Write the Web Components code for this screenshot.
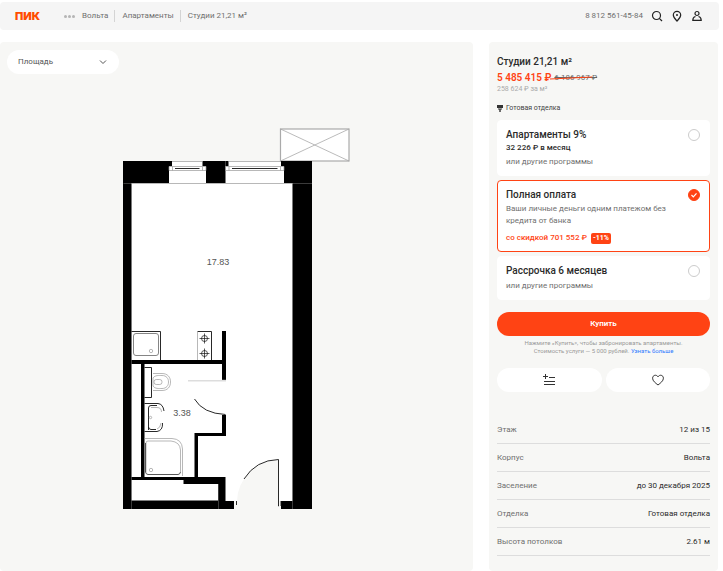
<!DOCTYPE html>
<html lang="ru">
<head>
<meta charset="utf-8">
<meta name="viewport" content="width=device-width, initial-scale=1">
<title>Студии 21,21 м² — ПИК</title>
<style>
body { margin: 0; background: #fff; color: #2b2b2b; font: 8px/12px Roboto, "Liberation Sans", sans-serif; --accent: #ff4314; --panel: #f7f7f5; --muted: #6f6f6f; }
</style>
</head>
<body>
<listing-page>
  <site-header slot="header"></site-header>
  <plan-viewer slot="plan"><floor-plan></floor-plan></plan-viewer>
  <offer-panel slot="offer">
    <price-summary></price-summary>
    <payment-options></payment-options>
    <purchase-actions></purchase-actions>
    <flat-details></flat-details>
  </offer-panel>
</listing-page>

<template id="listing-page">
  <style>
    :host { display: flex; flex-direction: column; gap: 12px; min-height: 100vh; box-sizing: border-box; padding-top: 2px; }
    main { flex: 1; display: grid; grid-template-columns: minmax(0, 1fr) 229px; gap: 16px; padding-right: 5px; }
  </style>
  <slot name="header"></slot>
  <main><slot name="plan"></slot><slot name="offer"></slot></main>
</template>

<template id="site-header">
  <style>
    :host { display: block; margin-right: 4px; background: #f5f5f5; border-radius: 4px; }
    header { display: flex; align-items: center; height: 28px; padding: 0 16px 0 15px; color: var(--muted); }
    a { color: inherit; text-decoration: none; }
    .logo { color: #ff4d00; font: 900 11px/12px Inter, sans-serif; margin-right: 24px; }
    nav { display: flex; align-items: center; }
    nav a { padding: 0 6px 0 7px; }
    nav a + a { border-left: 1px solid #d4d4d4; }
    .dots { display: flex; gap: 1px; padding: 0; border: 0; background: none; }
    .dots i { width: 3px; height: 3px; border-radius: 50%; background: #b5b5b5; }
    .tools { margin-left: auto; display: flex; align-items: center; gap: 8px; }
    .tools button { display: block; border: 0; padding: 0; background: none; width: 12px; height: 12px; }
    svg { display: block; fill: none; stroke: #222; stroke-width: 1.2; }
  </style>
  <header>
    <a class="logo" href="#">ПИК</a>
    <nav aria-label="Навигация">
      <button class="dots" aria-label="Ещё"><i></i><i></i><i></i></button>
      <a href="#">Вольта</a><a href="#">Апартаменты</a><a href="#">Студии 21,21 м²</a>
    </nav>
    <div class="tools">
      <a href="tel:+78125614584">8 812 561-45-84</a>
      <button aria-label="Поиск"><svg width="12" height="12" viewBox="0 0 12 12"><circle cx="5.5" cy="5.5" r="4"/><path d="M8.3 8.3 11 11"/></svg></button>
      <button aria-label="Карта"><svg width="12" height="12" viewBox="0 0 12 12"><path d="M6 11C4.500 9.400 2.300 7.400 2.300 5a3.700 3.700 0 0 1 7.400 0C9.700 7.400 7.500 9.400 6 11Z"/><circle cx="6" cy="4.900" r=".4"/></svg></button>
      <button aria-label="Профиль"><svg width="12" height="12" viewBox="0 0 12 12"><circle cx="6" cy="3.500" r="2"/><path d="M4.500 6.500C2.700 7 1.800 8.400 1.800 10.300h8.400C10.200 8.400 9.300 7 7.500 6.500"/></svg></button>
    </div>
  </header>
</template>

<template id="plan-viewer">
  <style>
    :host { display: block; background: var(--panel); border-radius: 4px; padding: 8px 7px; }
    .filter { position: relative; display: block; width: 112px; }
    select { appearance: none; display: block; width: 100%; height: 24px; border: 0; border-radius: 12px; padding: 0 24px 0 11px; background: #fff; color: #555; font: inherit; }
    svg { position: absolute; right: 12px; top: 8px; fill: none; stroke: #555; }
    .plan { display: flex; justify-content: center; padding-top: 54px; }
  </style>
  <div class="filter">
    <select aria-label="Площадь"><option>Площадь</option></select>
    <svg width="8" height="8" viewBox="0 0 8 8"><path d="M1 2.500 4 5.500 7 2.500"/></svg>
  </div>
  <div class="plan"><slot></slot></div>
</template>

<template id="floor-plan">
  <style>
    :host { display: block; }
    svg { display: block; max-width: 100%; }
    text { font: 9px "Liberation Sans", sans-serif; fill: #555; text-anchor: middle; }
    .thin { fill: none; stroke: #999; stroke-width: .7; }
    .dark { fill: none; stroke: #111; stroke-width: .9; }
  </style>
  <svg width="227" height="381" viewBox="123 128 227 381" role="img" aria-label="План студии">
    <path fill="#fff" d="M131 161H293V501H131Z"/>
    <path fill="#f7f7f5" d="M279 460A42 42 0 0 0 237 501V509H279Z"/>
    <g stroke="#aaa" fill="none"><rect x="280.500" y="129" width="68.500" height="32" fill="#fff" stroke-width="1.200"/><path stroke-width=".8" d="M280.500 129 349 161M349 129 280.500 161"/></g>
    <path d="M123 161H169V183H131.500V500.500H218V484H183.500V480H131.500V477H141V364H131.500V360H222V331H226V379H222V364H144.500V477H194.500V433H222V415H226V436H198V477H225.500V501H234V509H123ZM206 161H225.500V183H206ZM284 161H312V509H281V501H292.500V183H284Z"/>
    <path d="M169 161h3v5h-3zM202.500 161h3.500v5h-3.500zM225.500 161h3v5h-3zM281 161h3v5h-3z"/>
    <path class="thin" d="M172 161.500H202.500M229 161.500H281M131 183.500H293M169 166.500H206V170.500H169ZM172.500 166.500V170.500M202.500 166.500V170.500M225.500 166.500H284V170.500H225.500ZM229 166.500V170.500M280.500 166.500V170.500"/>
    <path class="dark" d="M175 168.500H199.500M232 168.500H277.500"/>
    <path stroke="#777" stroke-width=".5" d="M123.500 183.500H131M131.500 183V509M218.500 484V509M292.500 183V509M293 183.500H312" fill="none"/>
    <path class="dark" d="M131.500 331.500H160.500V360M197.500 331.500H211.500V360"/>
    <path class="thin" d="M197.500 331V360"/>
    <rect class="dark" x="133.500" y="333.500" width="25" height="22" rx="2.500" style="stroke:#777"/>
    <circle class="thin" cx="151" cy="351" r="1.700"/>
    <g class="dark" style="stroke-width:.7"><circle cx="204.500" cy="338.500" r="3"/><circle cx="204.500" cy="353.500" r="3"/><path d="M199.500 338.500h10M204.500 333.500v10M199.500 353.500h10M204.500 348.500v10"/></g>
    <path class="dark" d="M144.500 367.500H151.500V397.500H144.500"/>
    <path class="thin" d="M153 373.500H162C167.500 373.500 170.500 377 170.500 382S167.500 390.500 162 390.500H153M153 378C155 375 159 375.500 162 375.500C166.500 375.500 168.500 378.500 168.500 382S166.500 388.500 162 388.500C159 388.500 155 389 153 386Z"/>
    <rect class="thin" x="154" y="379.500" width="8" height="5" rx="2.300"/>
    <path class="dark" d="M144.500 403.500H158Q163 404 164 411M148.500 430V408Q148.500 405.500 151 405.500H157M162.500 423Q163 430.500 157 431.500H144.500M148.500 427Q149 429.500 151 429.500H156"/>
    <path class="thin" d="M151 407.500H157Q161.500 407.500 161.500 412M161 423Q160.500 428 157 429"/>
    <circle class="thin" cx="150.500" cy="417.500" r="1.200"/>
    <path class="thin" d="M144.500 438.500H172Q182 439 182.500 449V476M146 472V443Q146 441 148 441H171Q180 442 180.500 450V472"/>
    <path class="dark" d="M145.500 443V472Q146 474.500 148 474.500H178Q180 474.500 180.500 472" style="stroke:#444"/>
    <circle class="thin" cx="151" cy="470" r="1.700"/>
    <path d="M188 380.800H226" stroke="#ddd" stroke-width="1.500"/>
    <path class="dark" d="M194.500 399Q203 413.500 225.500 414.500M244 479Q256 460 278.500 459.500V506H279M236.500 501V505M281 501V506M222 379.500H226"/>
    <text x="218" y="265">17.83</text>
    <text x="182" y="416">3.38</text>
  </svg>
</template>

<template id="offer-panel">
  <style>
    :host { display: block; background: var(--panel); border-radius: 4px; padding: 12px 8px 15px; }
  </style>
  <slot></slot>
</template>

<template id="price-summary">
  <style>
    :host { display: block; }
    h1, p { margin: 0; }
    h1 { font-size: 10px; line-height: 16px; font-weight: 500; }
    .price { display: flex; align-items: center; gap: 3px; line-height: 16px; }
    strong { color: var(--accent); font-size: 10px; font-weight: 600; }
    s { position: relative; color: #666; font-size: 8px; }
    s svg { position: absolute; left: -4px; top: 5px; stroke: var(--accent); }
    .unit { color: #aaa; font-size: 7px; line-height: 6px; }
    .finish { display: flex; align-items: center; gap: 3px; margin: 11px 0 6px; font-size: 7px; line-height: 11px; color: #444; }
  </style>
  <h1>Студии 21,21 м²</h1>
  <p class="price"><strong>5 485 415 ₽</strong><s>6 186 967 ₽<svg width="42" height="6" viewBox="0 0 42 6"><path d="M0 4 42 2"/></svg></s></p>
  <p class="unit">258 624 ₽ за м²</p>
  <p class="finish"><svg width="6" height="7" viewBox="0 0 6 7"><path fill="#333" d="M0 0H6V3H0ZM1 3.500H5V4.500H3.700V7H2.300V4.500H1Z"/></svg>Готовая отделка</p>
</template>

<template id="payment-options">
  <style>
    :host { display: block; }
    fieldset { display: grid; gap: 4px; border: 0; margin: 0; padding: 0; min-width: 0; }
    label { display: grid; grid-template-columns: 1fr 13px; gap: 16px; align-items: start; padding: 7px 8px; border: 1px solid #fff; border-radius: 4px; background: #fff; color: var(--muted); }
    label:has(:checked) { border-color: var(--accent); }
    input { appearance: none; margin: 1px 0 0; width: 12px; height: 12px; border: 1px solid #ccc; border-radius: 50%; background: #fff; }
    input:checked { border-color: var(--accent); background: var(--accent) }
    .mark { position: relative; height: 14px; }
    .mark input { display: block; }
    .mark svg { position: absolute; left: 2px; top: 3px; fill: none; stroke: #fff; stroke-width: 1.200; pointer-events: none; }
    b, span { display: block; }
    b { color: #2b2b2b; font-size: 10px; line-height: 14px; font-weight: 500; }
    .month { color: #2b2b2b; font-weight: 500; }
    .alt { margin-top: 2px; }
    .about { margin-top: 1px; }
    .save { display: flex; align-items: center; gap: 4px; margin-top: 5px; color: var(--accent); font-weight: 500; }
    .save em { font-style: normal; font-size: 7px; line-height: 11px; font-weight: 700; color: #fff; background: var(--accent); padding: 0 2px; border-radius: 2px; }
  </style>
  <fieldset aria-label="Способ оплаты">
    <label><span><b>Апартаменты 9%</b><span class="month">32 226 ₽ в месяц</span><span class="alt">или другие программы</span></span><span class="mark"><input type="radio" name="pay"></span></label>
    <label><span><b>Полная оплата</b><span class="about">Ваши личные деньги одним платежом без кредита от банка</span><span class="save">со скидкой 701 552 ₽ <em>-11%</em></span></span><span class="mark"><input type="radio" name="pay" checked><svg width="8" height="8" viewBox="0 0 8 8"><path d="M1.500 4 3.300 5.800 6.500 2.300"/></svg></span></label>
    <label><span><b>Рассрочка 6 месяцев</b><span class="alt">или другие программы</span></span><span class="mark"><input type="radio" name="pay"></span></label>
  </fieldset>
</template>

<template id="purchase-actions">
  <style>
    :host { display: block; margin: 12px 0 24px; }
    button { display: flex; align-items: center; justify-content: center; width: 100%; height: 24px; border: 0; border-radius: 12px; padding: 0; background: #fff; font: inherit; }
    .buy { background: var(--accent); color: #fff; font-weight: 600; }
    p { margin: 3px 0 13px; text-align: center; font-size: 6px; line-height: 8px; color: #999; }
    p span { display: block; }
    a { color: #2f7bff; text-decoration: none; }
    .pair { display: grid; grid-template-columns: 1fr 1fr; gap: 4px; }
    svg { display: block; fill: none; stroke: #333; }
  </style>
  <button class="buy">Купить</button>
  <p><span>Нажмите «Купить», чтобы забронировать апартаменты.</span><span>Стоимость услуги — 5 000 рублей. <a href="#">Узнать больше</a></span></p>
  <div class="pair">
    <button aria-label="Сравнить"><svg width="12" height="12" viewBox="0 0 12 12"><path d="M2.500 0V5M0 2.500H5M6 3.500H12M1 7.500H12M1 10.500H12"/></svg></button>
    <button aria-label="В избранное"><svg width="12" height="12" viewBox="0 0 12 12"><path d="M6 11C3.500 9 .600 7 .600 4.200C.600 1 4.500 .200 6 2.800C7.500 .200 11.400 1 11.400 4.200C11.400 7 8.500 9 6 11Z"/></svg></button>
  </div>
</template>

<template id="flat-details">
  <style>
    :host { display: block; }
    table { width: 100%; border-collapse: separate; border-spacing: 0; }
    th, td { height: 26px; padding: 1px 0 0; border-bottom: 1px solid #ddd; font-weight: 400; text-align: left; color: var(--muted); }
    td { text-align: right; color: #2b2b2b; }
  </style>
  <table>
    <tr><th scope="row">Этаж</th><td>12 из 15</td></tr>
    <tr><th scope="row">Корпус</th><td>Вольта</td></tr>
    <tr><th scope="row">Заселение</th><td>до 30 декабря 2025</td></tr>
    <tr><th scope="row">Отделка</th><td>Готовая отделка</td></tr>
    <tr><th scope="row">Высота потолков</th><td>2.61 м</td></tr>
  </table>
</template>

<script>
const fromTemplate = name => class extends HTMLElement {
  constructor() {
    super();
    this.attachShadow({ mode: "open" }).append(document.getElementById(name).content.cloneNode(true));
  }
};
for (const name of ["listing-page", "site-header", "plan-viewer", "floor-plan", "offer-panel", "price-summary", "payment-options", "purchase-actions", "flat-details"])
  customElements.define(name, fromTemplate(name));
</script>
</body>
</html>
